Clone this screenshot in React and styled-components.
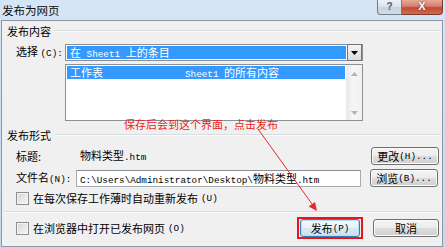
import React from "react";
import styled, { createGlobalStyle } from "styled-components";

const Global = createGlobalStyle`
  html, body { margin: 0; padding: 0; background: #f0f0f0; }
  body { font-family: "Noto Sans CJK SC", "Liberation Sans", sans-serif; font-size: 11px; color: #000; }
`;

const Window = styled.div`
  position: relative;
  width: 445px;
  height: 248px;
  background: linear-gradient(to bottom, #d6e5f5, #c4d8ee);
  display: flex;
  flex-direction: column;
  overflow: hidden;
`;

const TitleBar = styled.div`
  height: 20px;
  display: flex;
  align-items: flex-start;
  flex-shrink: 0;
`;

const Title = styled.div`
  padding: 3px 0 0 2px;
  font-size: 11.5px;
  line-height: 14px;
  color: #0c0c0c;
`;

const CaptionButtons = styled.div`
  margin-left: auto;
  margin-right: 2px;
  display: flex;
  height: 15px;
`;

const CapBtn = styled.div`
  width: ${(p) => p.$w}px;
  height: 15px;
  box-sizing: border-box;
  border: 1px solid ${(p) => (p.$close ? "#7b3b33" : "#6f7d8f")};
  border-top: none;
  ${(p) => (p.$close ? "border-left: none;" : "")}
  border-radius: ${(p) => (p.$close ? "0 0 4px 0" : "0 0 0 4px")};
  background: ${(p) =>
    p.$close
      ? "linear-gradient(to bottom, #e6a996 0%, #d47f6c 45%, #c34a33 55%, #cf6a52 100%)"
      : "linear-gradient(to bottom, #eef2f7 0%, #dbe3ec 45%, #c7d2de 55%, #d4dde8 100%)"};
  color: ${(p) => (p.$close ? "#fff" : "#4c5a6b")};
  font-family: "Liberation Sans", sans-serif;
  font-weight: bold;
  font-size: ${(p) => (p.$close ? "11px" : "10px")};
  line-height: 13px;
  text-align: center;
  text-shadow: ${(p) => (p.$close ? "0 0 2px #5a1a10" : "none")};
`;

const Client = styled.div`
  flex: 1;
  margin: 0 2px 1px 1px;
  border: 1px solid #8a98a8;
  background: #f0f0f0;
  padding: 3px 3px 0 5px;
  display: flex;
  flex-direction: column;
`;

const SectionHeader = styled.div`
  display: flex;
  align-items: center;
  gap: 4px;
  line-height: 14px;
  height: 14px;
  margin-top: ${(p) => p.$mt || 0}px;
  margin-right: -2px;
`;

const HLine = styled.div`
  flex: 1;
  height: 1px;
  background: #d9dcdf;
  border-bottom: 1px solid #fbfbfb;
`;

const Row = styled.div`
  display: flex;
  align-items: center;
  padding-left: 9px;
  margin-top: ${(p) => p.$mt || 0}px;
  height: ${(p) => p.$h || 18}px;
  line-height: 13px;
`;

const Label = styled.div`
  width: ${(p) => p.$w}px;
  flex-shrink: 0;
  white-space: nowrap;
`;

const M = styled.span`
  font-family: "Liberation Mono", monospace;
  font-size: 9.3px;
`;

const Combo = styled.div`
  width: 298px;
  height: 17px;
  box-sizing: border-box;
  border: 1px solid #8b8f96;
  background: #fff;
  display: flex;
  padding: 1px 0 1px 1px;
`;

const Selected = styled.div`
  flex: 1;
  background: #3399ff;
  color: #fff;
  padding-left: 3px;
  line-height: 13px;
  white-space: nowrap;
  margin-right: 1px;
`;

const DropBtn = styled.div`
  width: 15px;
  margin: -2px 0 -2px 0;
  box-sizing: border-box;
  border: 1px solid #70757c;
  background: linear-gradient(to bottom, #f4f4f4, #dcdcdc);
  display: flex;
  align-items: center;
  justify-content: center;
`;

const ListBox = styled.div`
  width: 298px;
  height: 57px;
  box-sizing: border-box;
  margin-left: 58px;
  margin-top: 3px;
  border: 1px solid #8b8f96;
  background: #fff;
  display: flex;
`;

const ListArea = styled.div`
  flex: 1;
  padding: 1px 1px 0 1px;
`;

const ListItem = styled.div`
  display: flex;
  background: #3399ff;
  color: #fff;
  height: 13px;
  line-height: 13px;
  padding-left: 3px;
  white-space: nowrap;
`;

const ListCol = styled.div`
  width: ${(p) => p.$w}px;
`;

const ScrollBar = styled.div`
  width: 15px;
  background: linear-gradient(to right, #e9e9e9, #f6f6f6 40%, #f1f1f1);
  border-left: 1px solid #ececec;
  display: flex;
  flex-direction: column;
  justify-content: space-between;
  align-items: center;
  padding: 7px 0 5px;
`;

const Value = styled.div`
  flex: 1;
  white-space: nowrap;
`;

const Button = styled.div`
  width: ${(p) => p.$w || 68}px;
  height: 18px;
  box-sizing: border-box;
  border: 1px solid ${(p) => (p.$default ? "#3c7fb1" : "#707070")};
  border-radius: 3px;
  background: ${(p) =>
    p.$default
      ? "linear-gradient(to bottom, #f4f9fd 0%, #e8f2f9 50%, #d9e9f4 51%, #cde1ef 100%)"
      : "linear-gradient(to bottom, #f4f4f4 0%, #ececec 50%, #dddddd 51%, #d0d0d0 100%)"};
  box-shadow: inset 0 0 0 1px ${(p) => (p.$default ? "#aee0f8" : "#fbfbfb")};
  display: flex;
  align-items: center;
  justify-content: center;
  line-height: 13px;
  white-space: nowrap;
  flex-shrink: 0;
  margin-left: ${(p) => p.$ml || 0}px;
`;

const TextInput = styled.div`
  width: 285px;
  height: 17px;
  box-sizing: border-box;
  border: 1px solid #a6abb3;
  border-top-color: #8b8f96;
  background: #fff;
  padding-left: 3px;
  line-height: 15px;
  white-space: nowrap;
  overflow: hidden;
  flex-shrink: 0;
`;

const CheckRow = styled.label`
  display: flex;
  align-items: center;
  gap: 3px;
  padding-left: 9px;
  margin-top: ${(p) => p.$mt || 0}px;
  line-height: 13px;
  white-space: nowrap;
`;

const Check = styled.span`
  width: 13px;
  height: 13px;
  box-sizing: border-box;
  border: 1px solid #8e8f8f;
  background: linear-gradient(135deg, #d5d5d5, #f8f8f8);
  box-shadow: inset 0 0 0 1px #f4f4f4;
  flex-shrink: 0;
  margin-right: 1px;
`;

const Separator = styled.div`
  height: 1px;
  background: #d9dcdf;
  border-bottom: 1px solid #fbfbfb;
  margin: 6px -2px 0 -4px;
`;

const BottomRow = styled.div`
  display: flex;
  align-items: center;
  margin-top: 4px;
`;

const Spacer = styled.div`
  flex: 1;
`;

const RedBox = styled.div`
  border: 2px solid #e8161b;
  padding: 0 1px;
  display: flex;
  align-items: center;
  height: 22px;
  box-sizing: border-box;
`;

const Note = styled.div`
  position: absolute;
  left: 124px;
  top: 117px;
  color: #ec1c24;
  font-size: 11px;
  line-height: 14px;
  white-space: nowrap;
`;

const ArrowSvg = styled.svg`
  position: absolute;
  left: 0;
  top: 0;
  pointer-events: none;
`;

const Tri = ({ color = "#000", up = false }) => (
  <svg width="7" height="4" viewBox="0 0 7 4">
    {up ? (
      <polygon points="0,4 7,4 3.5,0" fill={color} />
    ) : (
      <polygon points="0,0 7,0 3.5,4" fill={color} />
    )}
  </svg>
);

export default function App() {
  return (
    <>
      <Global />
      <Window>
        <TitleBar>
          <Title>发布为网页</Title>
          <CaptionButtons>
            <CapBtn $w={25}>?</CapBtn>
            <CapBtn $w={41} $close>X</CapBtn>
          </CaptionButtons>
        </TitleBar>
        <Client>
          <SectionHeader>
            发布内容
            <HLine />
          </SectionHeader>
          <Row $mt={6} $h={17}>
            <Label $w={49}>
              选择 <M>(C):</M>
            </Label>
            <Combo>
              <Selected>
                在<M> Sheet1 </M>上的条目
              </Selected>
              <DropBtn>
                <Tri />
              </DropBtn>
            </Combo>
          </Row>
          <ListBox>
            <ListArea>
              <ListItem>
                <ListCol $w={115}>工作表</ListCol>
                <span>
                  <M>Sheet1 </M>的所有内容
                </span>
              </ListItem>
            </ListArea>
            <ScrollBar>
              <Tri up color="#b4b4b4" />
              <Tri color="#b4b4b4" />
            </ScrollBar>
          </ListBox>
          <SectionHeader $mt={7}>
            发布形式
            <HLine />
          </SectionHeader>
          <Row $mt={5}>
            <Label $w={64}>标题:</Label>
            <Value>
              物料类型<M>.htm</M>
            </Value>
            <Button>
              更改<M>(H)...</M>
            </Button>
          </Row>
          <Row $mt={4}>
            <Label $w={60}>
              文件名<M>(N):</M>
            </Label>
            <TextInput>
              <M>C:\Users\Administrator\Desktop\</M>物料类型<M>.htm</M>
            </TextInput>
            <Button $ml={9}>
              浏览<M>(B)...</M>
            </Button>
          </Row>
          <CheckRow $mt={5}>
            <Check />
            在每次保存工作薄时自动重新发布<M>(U)</M>
          </CheckRow>
          <Separator />
          <BottomRow>
            <CheckRow>
              <Check />
              在浏览器中打开已发布网页<M>(O)</M>
            </CheckRow>
            <Spacer />
            <RedBox>
              <Button $w={60} $default>
                发布<M>(P)</M>
              </Button>
            </RedBox>
            <Button $w={66} $ml={10}>
              取消
            </Button>
          </BottomRow>
        </Client>
        <Note>保存后会到这个界面，点击发布</Note>
        <ArrowSvg width="445" height="248" viewBox="0 0 445 248">
          <line x1="258" y1="129" x2="312" y2="204" stroke="#e8262b" strokeWidth="1" />
          <polygon points="317,211 308.6,206.6 315,202" fill="#e8262b" />
        </ArrowSvg>
      </Window>
    </>
  );
}
